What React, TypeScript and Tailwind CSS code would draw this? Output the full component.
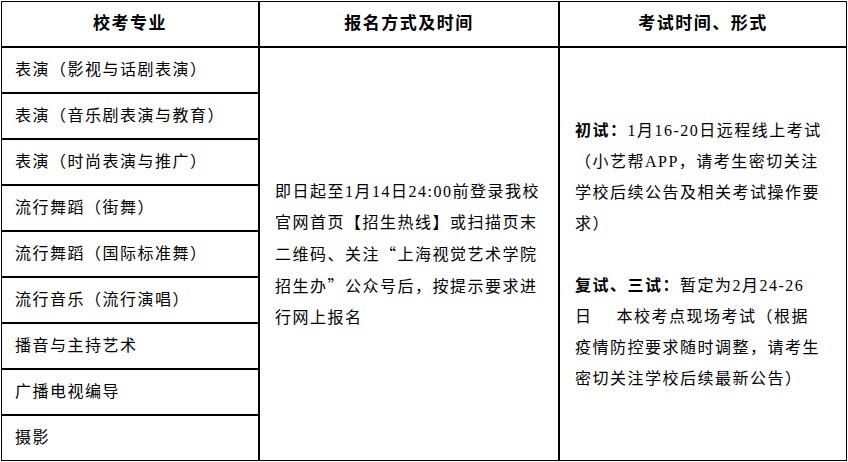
import React from "react";

const font = {
  fontFamily: '"Liberation Serif", "Noto Sans CJK SC", serif',
};

const majors = [
  "表演（影视与话剧表演）",
  "表演（音乐剧表演与教育）",
  "表演（时尚表演与推广）",
  "流行舞蹈（街舞）",
  "流行舞蹈（国际标准舞）",
  "流行音乐（流行演唱）",
  "播音与主持艺术",
  "广播电视编导",
  "摄影",
];

const Q = ({ c }: { c: string }) => (
  <span className="font-['Noto_Sans_CJK_SC']">{c}</span>
);

export default function App() {
  return (
    <div className="w-[848px] h-[462px] bg-white pl-[1px] pt-[1px]">
      <div
        className="w-[846px] h-[460px] border border-black grid grid-cols-[258px_300px_286px] grid-rows-[46px_repeat(8,46px)_44px] text-black text-[16px] tracking-[1.5px]"
        style={font}
      >
        <div className="col-start-1 row-start-1 border-r-2 border-b-2 border-black flex items-center justify-center font-bold text-[17px]">
          校考专业
        </div>
        <div className="col-start-2 row-start-1 border-r-2 border-b-2 border-black flex items-center justify-center font-bold text-[17px]">
          报名方式及时间
        </div>
        <div className="col-start-3 row-start-1 border-b-2 border-black flex items-center justify-center font-bold text-[17px]">
          考试时间、形式
        </div>

        {majors.map((m, i) => (
          <div
            key={m}
            className={
              i < majors.length - 1
                ? "col-start-1 border-r-2 border-b-2 border-black flex items-center pl-[13px] whitespace-nowrap"
                : "col-start-1 border-r-2 border-black flex items-center pl-[13px] whitespace-nowrap"
            }
            style={{ gridRowStart: i + 2 }}
          >
            {m}
          </div>
        ))}

        <div className="col-start-2 row-start-2 row-span-9 border-r-2 border-black flex flex-col justify-center pl-[15px] leading-[31px] whitespace-nowrap">
          <div>即日起至1月14日24:00前登录我校</div>
          <div>官网首页【招生热线】或扫描页末</div>
          <div>
            二维码、关注<Q c="“" />上海视觉艺术学院
          </div>
          <div>
            招生办<Q c="”" />公众号后，按提示要求进
          </div>
          <div>行网上报名</div>
        </div>

        <div className="col-start-3 row-start-2 row-span-9 flex flex-col justify-center pl-[15px] leading-[31px] whitespace-nowrap">
          <div>
            <span className="font-bold">初试：</span>1月16-20日远程线上考试
          </div>
          <div>（小艺帮APP，请考生密切关注</div>
          <div>学校后续公告及相关考试操作要</div>
          <div>求）</div>
          <div className="h-[31px]" />
          <div>
            <span className="font-bold">复试、三试：</span>暂定为2月24-26
          </div>
          <div>
            日<span className="inline-block w-[24px]" />本校考点现场考试（根据
          </div>
          <div>疫情防控要求随时调整，请考生</div>
          <div>密切关注学校后续最新公告）</div>
        </div>
      </div>
    </div>
  );
}
